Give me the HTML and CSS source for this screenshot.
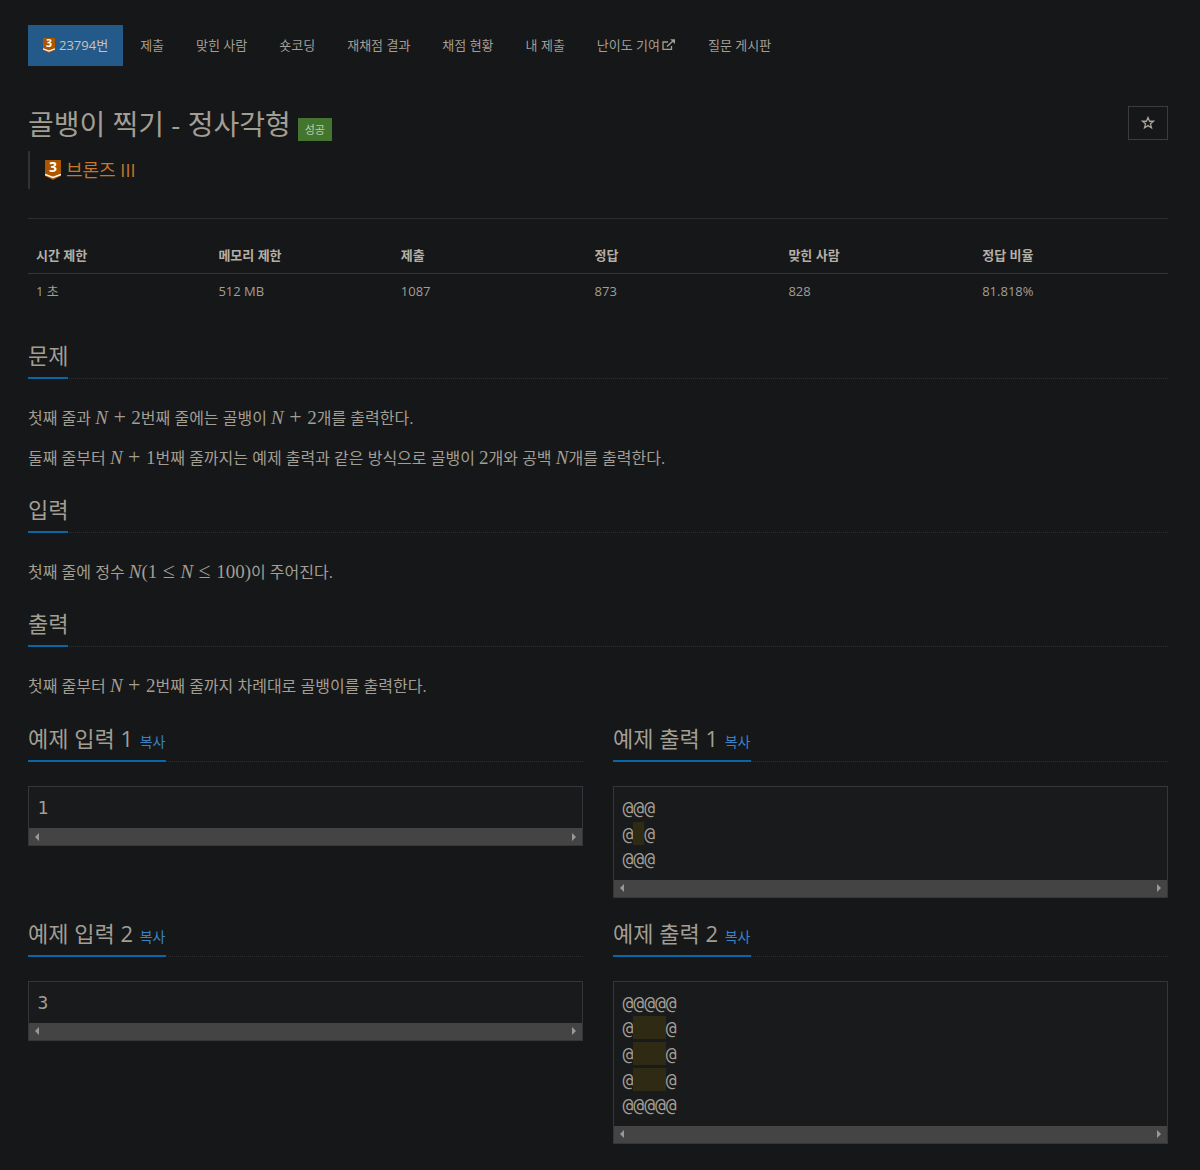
FILE: index.html
```html
<!DOCTYPE html>
<html lang="ko">
<head>
<meta charset="utf-8">
<title>골뱅이 찍기 - 정사각형</title>
<link rel="stylesheet" href="styles.css">
</head>
<body>
<nav class="tabs">
  <a class="tab tab-active">
    <svg class="tier-icon tier-small" viewBox="0 0 16 20"><path fill="#ad5600" d="M0 0H16V16L8 20L0 16Z"/><path fill="none" stroke="#fff" stroke-width="1.6" d="M0 14.5L8 17.5L16 14.5"/><text x="8" y="12" class="tier-num">3</text></svg>
    23794번</a>
  <a class="tab">제출</a>
  <a class="tab">맞힌 사람</a>
  <a class="tab">숏코딩</a>
  <a class="tab">재채점 결과</a>
  <a class="tab">채점 현황</a>
  <a class="tab">내 제출</a>
  <a class="tab">난이도 기여
    <svg class="ext-icon" viewBox="0 0 14 12"><path fill="none" stroke="currentColor" stroke-width="1.3" d="M9.5 7V10.4H1V3H6"/><path fill="none" stroke="currentColor" stroke-width="1.5" d="M5 7.5L11.5 1.5"/><path fill="currentColor" d="M8.2 0.3H13V5.1Z"/></svg>
  </a>
  <a class="tab">질문 게시판</a>
</nav>

<header class="page-header">
  <div class="title-row">
    <h1 class="title">골뱅이 찍기 - 정사각형 <span class="label-success">성공</span></h1>
    <button class="star-btn" aria-label="즐겨찾기">
      <svg viewBox="0 0 16 16" class="star-icon"><path fill="none" stroke="currentColor" stroke-width="1.5" d="M8 1.8L9.8 6H14.3L10.8 8.9L12 13.6L8 11L4 13.6L5.2 8.9L1.7 6H6.2Z"/></svg>
    </button>
  </div>
  <div class="tier-quote">
    <svg class="tier-icon tier-large" viewBox="0 0 16 20"><path fill="#ad5600" d="M0 0H16V16L8 20L0 16Z"/><path fill="none" stroke="#fff" stroke-width="1.6" d="M0 14.5L8 17.5L16 14.5"/><text x="8" y="12" class="tier-num">3</text></svg>
    <span class="tier-name">브론즈 III</span>
  </div>
</header>

<table class="info">
  <colgroup><col class="col-a"><col class="col-a"><col class="col-b"><col class="col-b"><col class="col-b"><col class="col-b"></colgroup>
  <thead>
    <tr><th>시간 제한</th><th>메모리 제한</th><th>제출</th><th>정답</th><th>맞힌 사람</th><th>정답 비율</th></tr>
  </thead>
  <tbody>
    <tr><td>1 초</td><td>512 MB</td><td>1087</td><td>873</td><td>828</td><td>81.818%</td></tr>
  </tbody>
</table>

<section class="section">
  <div class="headline"><h2>문제</h2></div>
  <p>첫째 줄과 <span class="m"><i>N</i><span class="op">+</span>2</span>번째 줄에는 골뱅이 <span class="m"><i>N</i><span class="op">+</span>2</span>개를 출력한다.</p>
  <p>둘째 줄부터 <span class="m"><i>N</i><span class="op">+</span>1</span>번째 줄까지는 예제 출력과 같은 방식으로 골뱅이 <span class="m">2</span>개와 공백 <span class="m"><i>N</i></span>개를 출력한다.</p>
</section>

<section class="section">
  <div class="headline"><h2>입력</h2></div>
  <p>첫째 줄에 정수 <span class="m"><i>N</i>(1<span class="op">≤</span><i>N</i><span class="op">≤</span>100)</span>이 주어진다.</p>
</section>

<section class="section">
  <div class="headline"><h2>출력</h2></div>
  <p>첫째 줄부터 <span class="m"><i>N</i><span class="op">+</span>2</span>번째 줄까지 차례대로 골뱅이를 출력한다.</p>
</section>

<div class="samples">
  <div class="sample">
    <div class="headline sample-head"><h2>예제 입력 1 <a class="copy">복사</a></h2></div>
    <div class="code"><pre>1</pre><div class="scrollbar"><span class="arr arr-l"></span><span class="arr arr-r"></span></div></div>
  </div>
  <div class="sample">
    <div class="headline sample-head"><h2>예제 출력 1 <a class="copy">복사</a></h2></div>
    <div class="code"><pre>@@@
@<span class="sp"> </span>@
@@@</pre><div class="scrollbar"><span class="arr arr-l"></span><span class="arr arr-r"></span></div></div>
  </div>
  <div class="sample">
    <div class="headline sample-head"><h2>예제 입력 2 <a class="copy">복사</a></h2></div>
    <div class="code"><pre>3</pre><div class="scrollbar"><span class="arr arr-l"></span><span class="arr arr-r"></span></div></div>
  </div>
  <div class="sample">
    <div class="headline sample-head"><h2>예제 출력 2 <a class="copy">복사</a></h2></div>
    <div class="code"><pre>@@@@@
@<span class="sp">   </span>@
@<span class="sp">   </span>@
@<span class="sp">   </span>@
@@@@@</pre><div class="scrollbar"><span class="arr arr-l"></span><span class="arr arr-r"></span></div></div>
  </div>
</div>
</body>
</html>
```
FILE: styles.css
```css
* { box-sizing: border-box; }
html, body { margin: 0; }
body {
  background: #151719;
  color: #a39e93;
  font-family: "Open Sans", "Noto Sans CJK KR", sans-serif;
  font-size: 14px;
  line-height: 20px;
  padding: 25px 32px 27px 28px;
  height: 1170px;
  overflow: hidden;
}
.tabs { display: flex; height: 41px; }
.tab {
  display: flex;
  align-items: center;
  gap: 2px;
  padding: 0 16px 2px;
  font-size: 13px;
  color: #a39e93;
  white-space: nowrap;
}
.tab-active {
  background: #245a8a;
  color: #c8c3bc;
  padding: 0 15px 2px;
  gap: 4px;
  margin-right: 1px;
}
.tier-icon { display: block; flex: none; }
.tier-small { width: 12px; height: 15px; margin-top: 2px; }
.tier-large { width: 16px; height: 20px; }
.tier-num {
  font-family: "Open Sans", sans-serif;
  font-size: 14px;
  font-weight: 700;
  fill: #fff;
  text-anchor: middle;
}
.ext-icon { width: 14px; height: 12px; }

.page-header { margin-top: 40px; padding-bottom: 29px; border-bottom: 1px solid #2b2e31; }
.title-row { display: flex; justify-content: space-between; align-items: flex-start; }
.title {
  margin: 0;
  font-size: 28px;
  font-weight: 400;
  line-height: 36px;
  color: #a39e93;
  display: flex;
  align-items: center;
  gap: 7px;
  height: 36px;
}
.label-success {
  display: block;
  background: #44752f;
  color: #b8d0ab;
  font-size: 11px;
  line-height: 23px;
  height: 23px;
  padding: 0 7px;
  margin-top: 11px;
}
.star-btn {
  width: 40px;
  height: 34px;
  background: transparent;
  border: 1px solid #3b3e41;
  color: #a9a49a;
  padding: 0;
  display: flex;
  align-items: center;
  justify-content: center;
}
.star-icon { width: 14px; height: 14px; }
.tier-quote {
  margin-top: 9px;
  height: 38px;
  border-left: 2px solid #303336;
  padding-left: 15px;
  display: flex;
  align-items: center;
  gap: 5px;
}
.tier-name { font-size: 18px; color: #c7762a; }

.info { width: 1140px; margin-top: 19px; border-collapse: collapse; table-layout: fixed; font-size: 13px; }
.col-a { width: 16%; }
.col-b { width: 17%; }
.info th { text-align: left; padding: 7px 8px 8px; height: 35px; font-weight: 700; color: #b5b0a6; border-bottom: 1px solid #34373a; }
.info td { padding: 7px 8px 8px; height: 35px; }

.section { margin-top: 11px; }
.info + .section { margin-top: 21px; }
.headline { border-bottom: 1px dotted #2b2e31; height: 49px; }
.headline h2 {
  display: inline-block;
  margin: 0;
  height: 49px;
  padding-top: 11px;
  font-size: 22px;
  line-height: 28px;
  font-weight: 400;
  border-bottom: 2px solid #0b66a8;
}
.section p { margin: 0; font-size: 16px; line-height: 30px; height: 30px; margin-top: 10px; }
.section .headline + p { margin-top: 24px; }
.m { font-family: "Liberation Serif", serif; font-size: 19px; line-height: 1; }
.op { margin: 0 5.5px; font-size: 22px; line-height: 1; }
.m i { font-style: italic; }

.samples {
  display: grid;
  grid-template-columns: 555px 555px;
  column-gap: 30px;
  margin-top: 11px;
}
.sample { display: flex; flex-direction: column; }
.sample:nth-child(n+3) { margin-top: 9px; }
.sample-head { height: 50px; }
.sample-head h2 { height: 50px; padding: 12px 1px 0 0; font-size: 22px; }
.copy { font-size: 14px; color: #3b82c4; margin-left: 1px; }
.code {
  margin-top: 24px;
  border: 1px solid #33363a;
  background: #181a1c;
}
.code pre {
  margin: 0;
  padding: 8px 8.5px 7.5px;
  font-family: "DejaVu Sans Mono", monospace;
  font-size: 18px;
  line-height: 25.7px;
  color: #a39e93;
}
.sp { background: #2e2a14; padding: 1px 0; }
.scrollbar {
  height: 17px;
  background: #444;
  display: flex;
  justify-content: space-between;
  align-items: center;
  padding: 0 6px;
}
.arr { width: 0; height: 0; border-top: 4px solid transparent; border-bottom: 4px solid transparent; }
.arr-l { border-right: 4px solid #999; }
.arr-r { border-left: 4px solid #999; }
```
